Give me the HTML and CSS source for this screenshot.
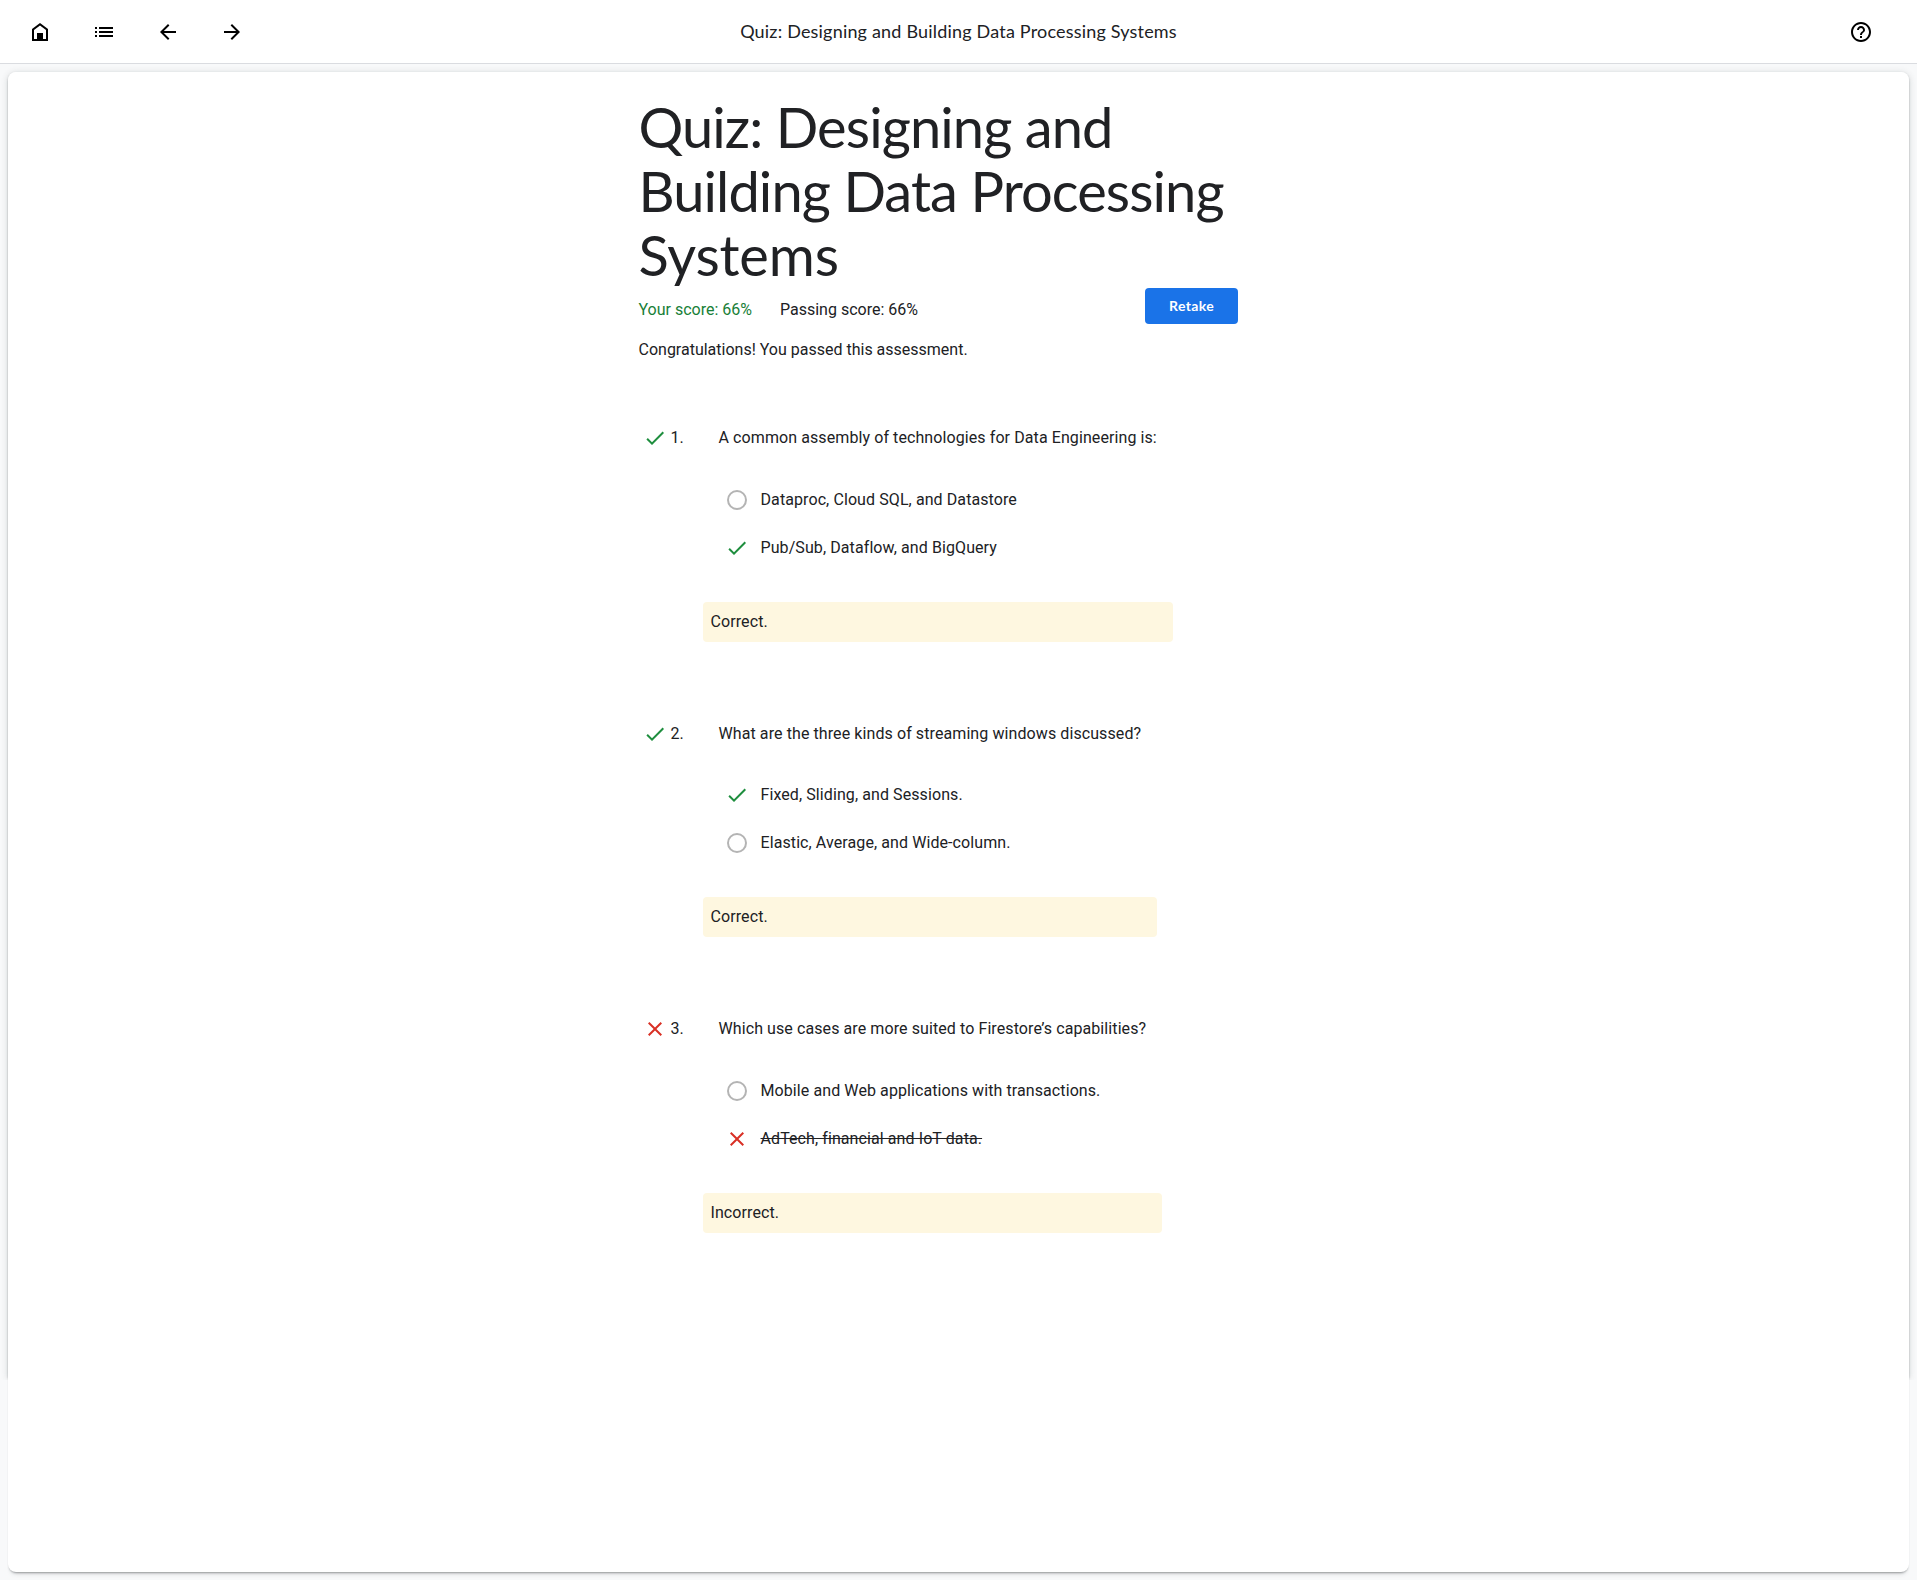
FILE: index.html
```html
<!DOCTYPE html>
<html lang="en">
<head>
<meta charset="utf-8">
<title>Quiz: Designing and Building Data Processing Systems</title>
<link rel="stylesheet" href="styles.css">
</head>
<body>
<svg class="defs" width="0" height="0" aria-hidden="true">
  <symbol id="check" viewBox="0 0 24 24"><path d="M9 16.17 4.83 12l-1.42 1.41L9 19 21 7l-1.41-1.41z"/></symbol>
  <symbol id="close" viewBox="0 0 24 24"><path d="M19 6.41 17.59 5 12 10.59 6.41 5 5 6.41 10.59 12 5 17.59 6.41 19 12 13.41 17.59 19 19 17.59 13.41 12z"/></symbol>
</svg>
<header class="topbar">
  <nav class="nav">
    <svg class="icon" viewBox="0 0 24 24"><path fill-rule="evenodd" d="M12 3 4 9v12h16V9zM6 19v-9l6-4.5 6 4.500V19zM9 13h6v6H9z"/></svg>
    <svg class="icon" viewBox="0 0 24 24"><path d="M3 13h2v-2H3zm0 4h2v-2H3zm0-8h2V7H3zm4 4h14v-2H7zm0 4h14v-2H7zM7 7v2h14V7z"/></svg>
    <svg class="icon" viewBox="0 0 24 24"><path d="M20 11H7.830l5.590-5.590L12 4l-8 8 8 8 1.410-1.410L7.830 13H20z"/></svg>
    <svg class="icon" viewBox="0 0 24 24"><path d="m12 4-1.410 1.410L16.170 11H4v2h12.170l-5.580 5.590L12 20l8-8z"/></svg>
  </nav>
  <div class="topbar-title">Quiz: Designing and Building Data Processing Systems</div>
  <div class="help">
    <svg class="icon" viewBox="0 0 24 24"><path d="M11 18h2v-2h-2zm1-16C6.480 2 2 6.480 2 12s4.480 10 10 10 10-4.480 10-10S17.520 2 12 2m0 18c-4.410 0-8-3.590-8-8s3.590-8 8-8 8 3.590 8 8-3.590 8-8 8m0-14c-2.210 0-4 1.790-4 4h2c0-1.100.9-2 2-2s2 .9 2 2c0 2-3 1.750-3 5h2c0-2.250 3-2.500 3-5 0-2.210-1.790-4-4-4"/></svg>
  </div>
</header>
<div class="stage">
  <div class="card-shadow"></div>
  <main class="card">
    <div class="content">
      <h1 class="title">Quiz: Designing and<br>Building Data Processing<br><span class="last-line">Systems</span></h1>
      <div class="scores">
        <span class="score pass">Your score: 66%</span>
        <span class="score">Passing score: 66%</span>
        <button class="retake">Retake</button>
      </div>
      <p class="message">Congratulations! You passed this assessment.</p>
      <section class="question">
        <svg class="mark ok"><use href="#check"/></svg>
        <span class="number">1.</span>
        <div class="body">
          <p class="prompt">A common assembly of technologies for Data Engineering is:</p>
          <div class="option"><span class="slot"><i class="radio"></i></span><span>Dataproc, Cloud SQL, and Datastore</span></div>
          <div class="option"><span class="slot"><svg class="mark ok"><use href="#check"/></svg></span><span>Pub/Sub, Dataflow, and BigQuery</span></div>
          <p class="feedback">Correct.</p>
        </div>
      </section>
      <section class="question q2">
        <svg class="mark ok"><use href="#check"/></svg>
        <span class="number">2.</span>
        <div class="body">
          <p class="prompt">What are the three kinds of streaming windows discussed?</p>
          <div class="option"><span class="slot"><svg class="mark ok"><use href="#check"/></svg></span><span>Fixed, Sliding, and Sessions.</span></div>
          <div class="option"><span class="slot"><i class="radio"></i></span><span>Elastic, Average, and Wide-column.</span></div>
          <p class="feedback">Correct.</p>
        </div>
      </section>
      <section class="question">
        <svg class="mark bad"><use href="#close"/></svg>
        <span class="number">3.</span>
        <div class="body">
          <p class="prompt">Which use cases are more suited to Firestore’s capabilities?</p>
          <div class="option"><span class="slot"><i class="radio"></i></span><span>Mobile and Web applications with transactions.</span></div>
          <div class="option"><span class="slot"><svg class="mark bad"><use href="#close"/></svg></span><s>AdTech, financial and IoT data.</s></div>
          <p class="feedback">Incorrect.</p>
        </div>
      </section>
    </div>
  </main>
</div>
</body>
</html>
```
FILE: styles.css
```css
* { box-sizing: border-box; }
body {
  margin: 0;
  height: 1580px;
  display: flex;
  flex-direction: column;
  background: #f8f9fa;
  color: #202124;
  font: 16px/24px Roboto, "Liberation Sans", sans-serif;
}
p, h1 { margin: 0; }
svg { display: block; flex: none; }
.defs { position: absolute; }
.topbar {
  flex: none;
  height: 64px;
  display: grid;
  grid-template-columns: 1fr auto 1fr;
  align-items: center;
  padding: 0 28px;
  background: #fff;
  border-bottom: 1px solid #dadce0;
}
.nav { display: flex; gap: 40px; padding-top: 1px; }
.icon { width: 24px; height: 24px; fill: #000; }
.topbar-title {
  font: 18px/24px Lato, sans-serif;
  letter-spacing: .19px;
  padding-bottom: 1px;
}
.help { justify-self: end; padding-top: 1px; margin-right: 16px; }
.stage {
  flex: 1;
  display: grid;
  padding: 8px;
}
.card, .card-shadow { grid-area: 1 / 1; border-radius: 8px; }
.card-shadow {
  height: 1305px;
  border-radius: 8px 8px 0 0;
  box-shadow: 0 1px 2px rgba(60, 64, 67, .3), 0 1px 6px 1px rgba(60, 64, 67, .15);
  clip-path: inset(-8px -8px -3px -8px);
}
.card {
  position: relative;
  background: #fff;
  box-shadow: 0 2px 2px -1px rgba(60, 64, 67, .4), 0 5px 5px -4px rgba(60, 64, 67, .25);
}
.content { width: 640px; margin: 0 auto; padding-top: 23px; }
.title {
  height: 193px;
  font: 400 56px/64px Lato, sans-serif;
  letter-spacing: -.9px;
  white-space: nowrap;
}
.last-line { letter-spacing: -.15px; }
.scores { display: flex; align-items: flex-start; height: 36px; }
.score { padding-top: 10px; margin-right: 28px; }
.pass { color: #188038; }
.retake {
  width: 93px;
  height: 36px;
  margin-left: auto;
  margin-right: 41px;
  padding: 0 0 1px 1px;
  border: 0;
  border-radius: 4px;
  background: #1a73e8;
  color: #fff;
  font: 700 14px/34px Lato, sans-serif;
  letter-spacing: .35px;
}
.message { margin-top: 14px; }
.question {
  display: flex;
  align-items: flex-start;
  height: 296px;
  padding-left: 4px;
  letter-spacing: .09px;
}
.message + .question { margin-top: 64px; }
.q2 { height: 295px; }
.mark { width: 24px; height: 24px; }
.ok { fill: #1e8e3e; }
.bad { fill: #d93025; }
.number { width: 32px; margin-left: 4px; }
.body { width: max-content; }
.prompt { padding: 0 16px; margin-bottom: 38px; }
.q2 .prompt { margin-bottom: 37px; }
.option { display: flex; gap: 12px; height: 24px; margin: 0 0 24px 22px; }
.slot { width: 24px; height: 24px; display: grid; place-items: center; }
.radio { width: 20px; height: 20px; border: 2px solid #b4b4b4; border-radius: 50%; }
.feedback {
  height: 40px;
  margin-top: 42px;
  padding: 8px;
  border-radius: 4px;
  background: #fef7e0;
}
```
